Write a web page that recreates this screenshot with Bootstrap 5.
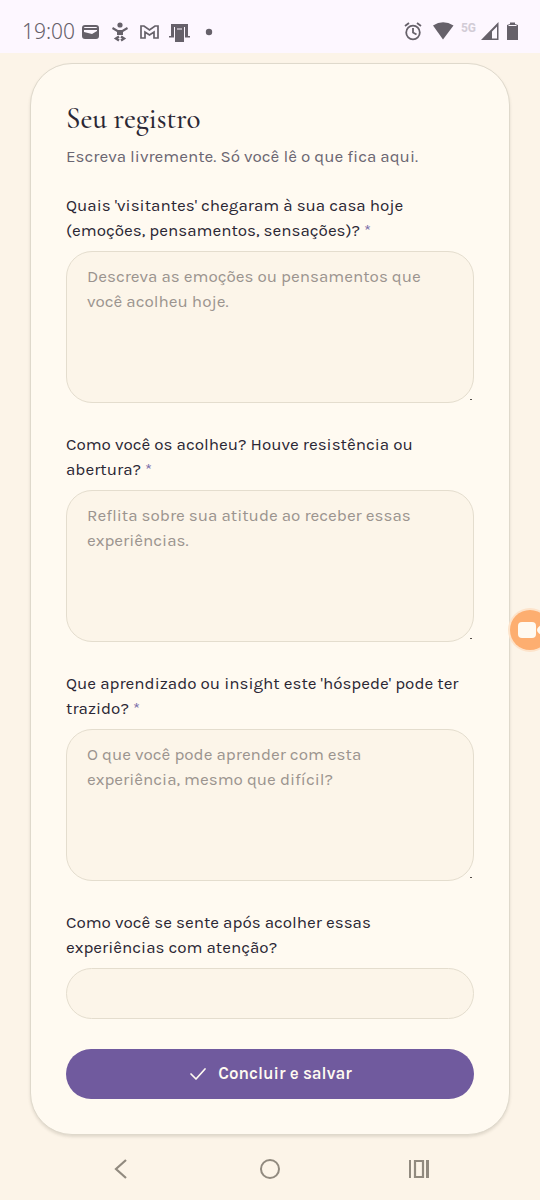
<!DOCTYPE html>
<html lang="pt-BR">
<head>
<meta charset="utf-8">
<meta name="viewport" content="width=device-width, initial-scale=1">
<title>Seu registro</title>
<link href="https://cdn.jsdelivr.net/npm/bootstrap@5.3.0/dist/css/bootstrap.min.css" rel="stylesheet">
<style>
  body { background: #fcf4e8; color: #2b2734; font-family: Karla, Inter, "Liberation Sans", sans-serif; font-size: 17px; line-height: 25px; }
  .status-bar { background: #fdf7ff; color: #66616a; height: 53px; padding: 10px 20px 0 22px; }
  .clock { font-family: "Noto Sans", sans-serif; font-size: 21px; font-weight: 300; width: 59px; }
  .net { font-family: Roboto, sans-serif; font-size: 12px; font-weight: 700; color: #d2ccd6; line-height: 12px; margin: 0 4px 8px 5px; }
  .entry-card { background: #fffaf1; border: 1px solid #dfd9cc; border-radius: 42px; padding: 35px; margin: 10px 30px 0; box-shadow: 0 2px 3px rgba(90, 80, 60, .16); }
  .entry-title { font-family: "Cormorant Garamond", Cormorant, "Liberation Serif", serif; font-size: 29px; font-weight: 500; line-height: 40px; margin: 0 0 5px; }
  .entry-intro { color: #6b6672; margin-bottom: 24px; }
  .field-group { margin-bottom: 29px; }
  .field-group:last-of-type { margin-bottom: 30px; }
  .entry-label { margin-bottom: 8px; }
  .star { color: #7a6da8; }
  .entry-field, .entry-field:focus { display: block; background: #fcf5e9; border: 1px solid #e4ddce; border-radius: 26px; font-size: 17px; line-height: 25px; padding: 12px 20px; color: inherit; }
  .entry-field::placeholder { color: #9b948f; opacity: 1; }
  textarea.entry-field { height: 152px; resize: vertical; }
  textarea.entry-field::-webkit-resizer { background: linear-gradient(#55504c, #55504c) 12px 12px / 2px 1px no-repeat; }
  input.entry-field { height: 51px; }
  .save-btn, .save-btn:hover { background: #705a9e; color: #fffaf1; height: 50px; border: 0; font-size: 17px; font-weight: 600; }
  .nav-key { color: #918a7f; width: 149px; height: 40px; }
  .recorder { right: -10px; top: 610px; width: 40px; height: 40px; background: #fdae70; box-shadow: 0 0 0 2px #fde3ca; }
</style>
</head>
<body class="d-flex flex-column min-vh-100 overflow-x-hidden">
<header class="status-bar d-flex justify-content-between">
  <div class="d-flex align-items-center h-100">
    <span class="clock">19:00</span>
    <svg width="134" height="22" viewBox="0 0 134 22" fill="currentColor" aria-hidden="true">
      <path fill-rule="evenodd" d="M4 4h11q3 0 3 3v8q0 3-3 3H4q-3 0-3-3V7q0-3 3-3zm0 2q-1 0-1 1h13q0-1-1-1zM3 9v2l8 2 5-3V9z"/>
      <circle cx="39" cy="4" r="2.6"/><path d="M32 6l5 3h4l5-3 1 2-5 3v3h-6v-3l-5-3z"/>
      <path d="M38 15.500l-3 2 3 2M40 15.500l3 2-3 2" fill="none" stroke="currentColor" stroke-width="2.400"/>
      <path d="M60 17V5h3l5.500 4L74 5h3v12h-4v-6l-4.500 3-4.500-3v6z" fill="none" stroke="currentColor" stroke-width="1.700"/>
      <path d="M90 3h17v12h2v1.500h-5V6H93v10.500h-5V15h2z"/><path d="M94 6h9v15h-9z"/><path d="M96 8h5" stroke="#fdf7ff"/>
      <circle cx="128" cy="11" r="3.200"/>
    </svg>
  </div>
  <div class="d-flex align-items-center h-100">
    <svg width="52" height="22" viewBox="0 0 52 22" fill="none" stroke="currentColor" stroke-width="1.800" aria-hidden="true">
      <circle cx="9" cy="11.500" r="6.800"/><path d="M9 7v4.500l3.500 2M1 5l4-3M17 5l-4-3"/>
      <path d="M29 4.500q10-6.500 20.500 0L39 18.500z" fill="currentColor" stroke="none"/>
    </svg>
    <span class="net">5G</span>
    <svg width="40" height="22" viewBox="0 0 40 22" fill="currentColor" aria-hidden="true">
      <path fill-rule="evenodd" d="M1 19L18.500 1v18zm11-1.500h5V5.500l-5 5z"/>
      <path d="M27 4l3-1V1.500h5V3l3 1v15H27z"/><path d="M28.500 4.500h8" stroke="#fdf7ff"/>
    </svg>
  </div>
</header>

<main class="entry-card">
  <h1 class="entry-title">Seu registro</h1>
  <p class="entry-intro">Escreva livremente. Só você lê o que fica aqui.</p>
  <form class="d-flex flex-column">
    <div class="field-group">
      <label class="entry-label d-block pe-1" for="visitantes">Quais 'visitantes' chegaram à sua casa hoje (emoções, pensamentos, sensações)? <span class="star">*</span></label>
      <textarea class="entry-field form-control" id="visitantes" placeholder="Descreva as emoções ou pensamentos que você acolheu hoje."></textarea>
    </div>
    <div class="field-group">
      <label class="entry-label d-block pe-1" for="acolhida">Como você os acolheu? Houve resistência ou abertura? <span class="star">*</span></label>
      <textarea class="entry-field form-control" id="acolhida" placeholder="Reflita sobre sua atitude ao receber essas experiências."></textarea>
    </div>
    <div class="field-group">
      <label class="entry-label d-block pe-1" for="aprendizado">Que aprendizado ou insight este 'hóspede' pode ter trazido? <span class="star">*</span></label>
      <textarea class="entry-field form-control" id="aprendizado" placeholder="O que você pode aprender com esta experiência, mesmo que difícil?"></textarea>
    </div>
    <div class="field-group">
      <label class="entry-label d-block pe-1" for="sentimento">Como você se sente após acolher essas experiências com atenção?</label>
      <input class="entry-field form-control" id="sentimento" type="text">
    </div>
    <button class="save-btn btn rounded-pill w-100 d-flex align-items-center justify-content-center" type="button">
      <svg class="me-2" width="22" height="20" viewBox="0 0 22 20" fill="none" stroke="currentColor" stroke-width="1.700" stroke-linecap="round" stroke-linejoin="round" aria-hidden="true"><path d="M3 10l5 5L17 5"/></svg>
      Concluir e salvar
    </button>
  </form>
</main>

<nav class="d-flex justify-content-center mt-auto pb-2 mb-1" aria-label="Sistema">
  <button class="nav-key btn p-0" type="button" aria-label="Voltar"><svg width="22" height="22" viewBox="0 0 22 22" fill="none" stroke="currentColor" stroke-width="2.200"><path d="M16 2L6 11l10 9"/></svg></button>
  <button class="nav-key btn p-0" type="button" aria-label="Início"><svg width="22" height="22" viewBox="0 0 22 22" fill="none" stroke="currentColor" stroke-width="2"><circle cx="11" cy="11" r="9"/></svg></button>
  <button class="nav-key btn p-0" type="button" aria-label="Recentes"><svg width="22" height="22" viewBox="0 0 22 22" fill="none" stroke="currentColor"><path d="M2 2v18" stroke-width="2"/><path d="M7 3h8v16H7z" stroke-width="2.200"/><path d="M19.500 2v18" stroke-width="3"/></svg></button>
</nav>

<button class="recorder btn rounded-circle border-0 p-0 position-absolute overflow-hidden d-flex align-items-center" type="button" aria-label="Gravar tela">
  <svg width="40" height="40" viewBox="0 0 40 40" fill="#fffaf1"><rect x="8" y="12" width="18" height="16" rx="4"/><path d="M27 20q0-3 6-6v12q-6-3-6-6z"/></svg>
</button>
<script src="https://cdn.jsdelivr.net/npm/bootstrap@5.3.0/dist/js/bootstrap.bundle.min.js"></script>
</body>
</html>
